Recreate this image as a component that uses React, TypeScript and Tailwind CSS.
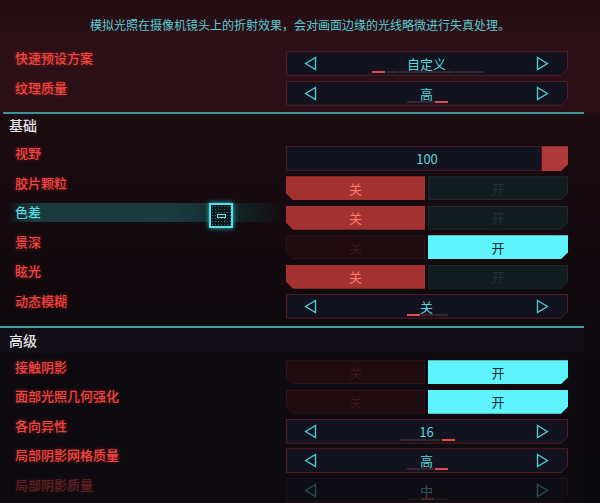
import React from 'react';

const FONT = '"Noto Sans CJK SC", "Noto Sans", sans-serif';

function Arrow({ dir }: { dir: 'l' | 'r' }) {
  return (
    <svg width="13" height="15" viewBox="0 0 13 15" className="block">
      {dir === 'l' ? (
        <path d="M11.5 1.5 L1.6 7.5 L11.5 13.5 Z" fill="none" stroke="#4fc9d1" strokeWidth="1.4" />
      ) : (
        <path d="M1.5 1.5 L11.4 7.5 L1.5 13.5 Z" fill="none" stroke="#4fc9d1" strokeWidth="1.4" />
      )}
    </svg>
  );
}

function Stepper({ value, dashes }: { value: string; dashes: number[] }) {
  return (
    <div className="h-[25px] bg-[#561a24] p-px [clip-path:polygon(0_0,100%_0,100%_calc(100%_-_7px),calc(100%_-_7px)_100%,0_100%)]">
      <div className="relative flex h-full items-center justify-between bg-[#11131e] pl-[17px] pr-[18px] [clip-path:polygon(0_0,100%_0,100%_calc(100%_-_6px),calc(100%_-_6px)_100%,0_100%)]">
        <Arrow dir="l" />
        <span className="text-[13px] leading-none text-[#5cd6de]">{value}</span>
        <Arrow dir="r" />
        <div className="absolute bottom-[2px] left-0 right-0 flex justify-center gap-px">
          {dashes.map((a, i) => (
            <div key={i} className={a ? 'h-[2px] w-[13px] bg-[#e04c49]' : 'h-[2px] w-[13px] bg-[#382630]'} />
          ))}
        </div>
      </div>
    </div>
  );
}

function Toggle({ on }: { on: boolean }) {
  return (
    <div className="flex h-[24px] gap-[3px] text-[13px] leading-none">
      {on ? (
        <div className="w-[139px] bg-[#33131a] p-px [clip-path:polygon(0_0,100%_0,100%_100%,7px_100%,0_calc(100%_-_7px))]">
          <div className="flex h-full items-center justify-center bg-[#1d0b0f] text-[#3d171b] [clip-path:polygon(0_0,100%_0,100%_100%,6px_100%,0_calc(100%_-_6px))]">
            关
          </div>
        </div>
      ) : (
        <div className="flex w-[139px] items-center justify-center bg-[#a3312f] text-[#ff7f74] [clip-path:polygon(0_0,100%_0,100%_100%,7px_100%,0_calc(100%_-_7px))]">
          关
        </div>
      )}
      {on ? (
        <div className="flex flex-1 items-center justify-center bg-[#5ff4fb] text-[#1a2b31] [clip-path:polygon(0_0,100%_0,100%_calc(100%_-_7px),calc(100%_-_7px)_100%,0_100%)]">
          开
        </div>
      ) : (
        <div className="flex-1 bg-[#1c292d] p-px [clip-path:polygon(0_0,100%_0,100%_calc(100%_-_7px),calc(100%_-_7px)_100%,0_100%)]">
          <div className="flex h-full items-center justify-center bg-[#111c1f] text-[#1f3337] [clip-path:polygon(0_0,100%_0,100%_calc(100%_-_6px),calc(100%_-_6px)_100%,0_100%)]">
            开
          </div>
        </div>
      )}
    </div>
  );
}

function Slider({ value }: { value: string }) {
  return (
    <div className="flex h-[25px]">
      <div className="flex-1 bg-[#4e1822] p-px">
        <div className="flex h-full items-center justify-center bg-[#11131e] pl-[26px] text-[13px] leading-none text-[#5cd6de]">
          {value}
        </div>
      </div>
      <div className="w-[26px] bg-[#b0393a] [clip-path:polygon(0_0,100%_0,100%_calc(100%_-_7px),calc(100%_-_7px)_100%,0_100%)]" />
    </div>
  );
}

function Row({
  label,
  children,
  selected,
  cursor,
  faded,
}: {
  label: string;
  children: React.ReactNode;
  selected?: boolean;
  cursor?: boolean;
  faded?: boolean;
}) {
  return (
    <div className={faded ? 'flex h-[29.5px] shrink-0 items-center opacity-[0.35]' : 'flex h-[29.5px] shrink-0 items-center'}>
      <div className="relative h-full w-[286px]">
        <div
          className={
            selected
              ? 'h-[19px] pl-[15px] text-[13px] font-medium leading-[18px] text-[#56d9e1] bg-[linear-gradient(90deg,transparent_0px,transparent_8px,#1a3a3d_30px,#1b3c3f_170px,#122628_235px,transparent_285px)]'
              : 'h-[19px] pl-[15px] text-[13px] font-medium leading-[18px] text-[#f2443f] [text-shadow:0_0_4px_rgba(240,60,60,0.45)]'
          }
        >
          {label}
        </div>
        {cursor && (
          <div className="absolute left-[209px] top-0 flex h-[25px] w-[24px] items-center justify-center border-2 border-[#52e4ec] bg-[#0a181c] bg-[radial-gradient(#2a6a70_0.8px,transparent_0.9px)] bg-[length:3px_3px] shadow-[0_0_5px_#2fb8c0]">
            <div className="h-[4px] w-[9px] border border-[#5ee8ef] bg-[#0a181c]" />
          </div>
        )}
      </div>
      <div className="w-[282px]">{children}</div>
    </div>
  );
}

export default function App() {
  return (
    <div
      className="relative h-[503px] w-[600px] overflow-hidden bg-[linear-gradient(180deg,#230c12_0px,#2b0f16_100px,#1b0b11_120px,#0e090d_320px,#09080b_503px)]"
      style={{ fontFamily: FONT }}
    >
      {/* top section */}
      <div className="flex h-[112px] flex-col bg-[linear-gradient(180deg,#240c12_0px,#2c1017_40px,#2a0f16_112px)]">
        <div className="pt-[16px] text-center text-[12px] leading-[18px] text-[#5ccbd3]">
          模拟光照在摄像机镜头上的折射效果，会对画面边缘的光线略微进行失真处理。
        </div>
        <div className="mt-[15px] flex flex-col">
          <Row label="快速预设方案">
            <Stepper value="自定义" dashes={[1, 0, 0, 0, 0, 0, 0, 0]} />
          </Row>
          <Row label="纹理质量">
            <Stepper value="高" dashes={[0, 0, 1]} />
          </Row>
        </div>
      </div>

      <div className="w-[584px]">
        <div className="ml-[3px] h-[2px] bg-[#3a979d]" />

        <div className="flex h-[30px] items-start pl-[9px] pt-[1px] text-[14px] font-medium leading-[20px] text-[#e4e2e4]">
          基础
        </div>

        <Row label="视野">
          <Slider value="100" />
        </Row>
        <Row label="胶片颗粒">
          <Toggle on={false} />
        </Row>
        <Row label="色差" selected cursor>
          <Toggle on={false} />
        </Row>
        <Row label="景深">
          <Toggle on={true} />
        </Row>
        <Row label="眩光">
          <Toggle on={false} />
        </Row>
        <Row label="动态模糊">
          <Stepper value="关" dashes={[1, 0, 0]} />
        </Row>

        <div className="mt-[4.5px] h-[2px] bg-[#3ea2a6]" />
        <div className="flex h-[25px] items-center bg-[#110e15] pl-[9px] text-[14px] font-medium leading-[20px] text-[#e4e2e4]">
          高级
        </div>
        <div className="flex h-[200px] flex-col bg-[#0d0b10] pt-[5px]">
          <Row label="接触阴影">
            <Toggle on={true} />
          </Row>
          <Row label="面部光照几何强化">
            <Toggle on={true} />
          </Row>
          <Row label="各向异性">
            <Stepper value="16" dashes={[0, 0, 0, 1]} />
          </Row>
          <Row label="局部阴影网格质量">
            <Stepper value="高" dashes={[0, 0, 1]} />
          </Row>
          <Row label="局部阴影质量" faded>
            <Stepper value="中" dashes={[0, 1, 0]} />
          </Row>
        </div>
      </div>
    </div>
  );
}
